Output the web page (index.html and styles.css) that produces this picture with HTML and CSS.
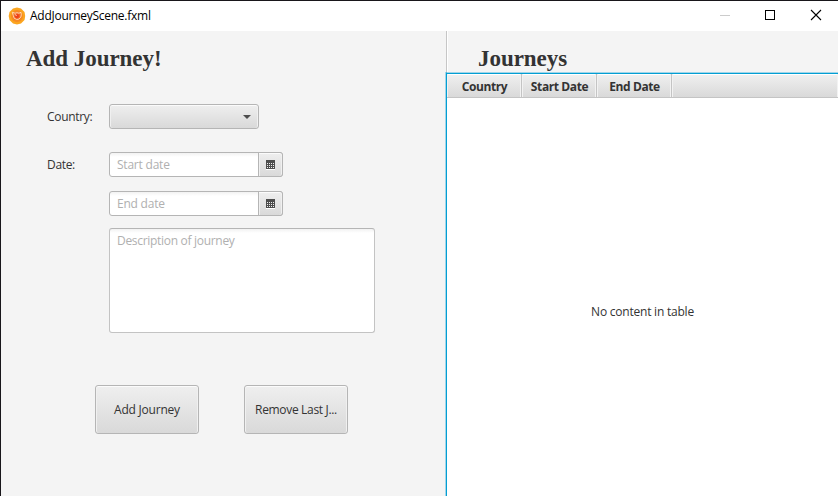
FILE: index.html
```html
<!DOCTYPE html>
<html lang="en">
<head>
<meta charset="utf-8">
<title>AddJourneyScene.fxml</title>
<link rel="stylesheet" href="styles.css">
</head>
<body>
<div class="window">
  <header class="titlebar">
    <svg class="app-icon" width="18" height="18" viewBox="0 0 18 18">
      <path d="M5 1.500 9 .5l4 1 3.500 3.500.7 4-.7 4-3.500 3.500-4 1-4-1L1.500 13 .7 9l.8-4z" fill="#fba51f"/>
      <circle cx="9" cy="9" r="6" fill="#f68a22"/>
      <circle cx="9" cy="9" r="4" fill="#f26522"/>
      <circle cx="9" cy="9" r="2" fill="#ef3e1c"/>
      <path d="M4.300 5.300 7 6.200Q9 5.200 11 6.200l2-.9Q13.600 8 12.800 10 11.500 12.800 8.800 12.500 5.300 12 5.300 8.500zM6.800 7.500l2 1" fill="none" stroke="#ffe3c2" stroke-width=".9"/>
    </svg>
    <span class="title">AddJourneyScene.fxml</span>
    <svg class="controls" width="108" height="30" viewBox="0 0 108 30" shape-rendering="crispEdges">
      <path d="M2 14.500h10" stroke="#ccc"/>
      <rect x="47.500" y="9.500" width="9" height="9" fill="none" stroke="#000"/>
      <path d="M93 9l10 10M103 9l-10 10" stroke="#000" stroke-width="1.100" shape-rendering="auto"/>
    </svg>
  </header>
  <div class="split">
    <main class="form">
      <h1 class="heading">Add Journey!</h1>
      <div class="row country">
        <span class="label w-country">Country:</span>
        <div class="combo"><svg width="8" height="4" viewBox="0 0 8 4"><path d="M0 0h8L4 4z" fill="#4d4d4d"/></svg></div>
      </div>
      <div class="row start">
        <span class="label w-date">Date:</span>
        <div class="date"><span class="prompt w-start">Start date</span><div class="picker"><svg class="cal" width="9" height="10" viewBox="0 0 9 10" shape-rendering="crispEdges"><path d="M0 0h9v9H0z" fill="#4d4d4d"/><path d="M1 3.500h8M1 5.500h8M1 7.500h8" stroke="#eee" stroke-dasharray="1 1"/><path d="M0 9.500h9" stroke="#fff"/></svg></div></div>
      </div>
      <div class="row end">
        <span class="label"></span>
        <div class="date"><span class="prompt w-end">End date</span><div class="picker"><svg class="cal" width="9" height="10" viewBox="0 0 9 10" shape-rendering="crispEdges"><path d="M0 0h9v9H0z" fill="#4d4d4d"/><path d="M1 3.500h8M1 5.500h8M1 7.500h8" stroke="#eee" stroke-dasharray="1 1"/><path d="M0 9.500h9" stroke="#fff"/></svg></div></div>
      </div>
      <div class="area"><span class="prompt w-desc">Description of journey</span></div>
      <div class="buttons">
        <div class="button"><span class="w-add">Add Journey</span></div>
        <div class="button"><span class="w-remove">Remove Last J...</span></div>
      </div>
    </main>
    <section class="journeys">
      <h1 class="heading">Journeys</h1>
      <div class="table">
        <div class="thead">
          <div class="th"><span class="h-country">Country</span></div>
          <div class="th"><span class="h-start">Start Date</span></div>
          <div class="th"><span class="h-end">End Date</span></div>
          <div class="filler"></div>
        </div>
        <div class="empty"><span class="w-empty">No content in table</span></div>
      </div>
    </section>
  </div>
</div>
</body>
</html>
```
FILE: styles.css
```css
* { box-sizing: border-box; }
body {
  margin: 0;
  overflow: hidden;
  font: 12px/16px "Open Sans", "Noto Sans", sans-serif;
  color: #333;
  white-space: nowrap;
}
svg { display: block; flex: none; }
.window {
  width: 838px;
  height: 496px;
  display: flex;
  flex-direction: column;
  border-top: 1px solid #18161a;
  border-left: 1px solid #18161a;
  background: #f4f4f4;
}
.titlebar {
  flex: none;
  display: flex;
  align-items: center;
  height: 30px;
  padding-left: 7px;
  background: #fff;
  color: #000;
}
.title { margin-left: 4px; letter-spacing: -.26px; }
.controls { margin-left: auto; margin-right: 12px; }
.split { flex: 1; display: flex; min-height: 0; }
.form { width: 445px; flex: none; }
.heading {
  margin: 0;
  font: bold 23px/28px "Liberation Serif", serif;
  letter-spacing: -.05px;
}
.form .heading { padding: 14px 0 0 25px; }
.row { display: flex; align-items: center; height: 25px; padding-left: 46px; }
.label { width: 62px; }
.country { margin-top: 31px; }
.start { margin-top: 23px; }
.end { margin-top: 14px; }
.combo, .button, .picker {
  background: linear-gradient(#efefef, #d9d9d9);
  border: 1px solid #b5b5b5;
  border-radius: 3px;
  box-shadow: inset 0 1px #fbfbfb, inset 1px 0 #f0f0f0, inset -1px 0 #f0f0f0;
}
.combo {
  width: 150px;
  height: 25px;
  display: flex;
  align-items: center;
  justify-content: flex-end;
  padding-right: 7px;
}
.date {
  width: 174px;
  height: 25px;
  display: flex;
  align-items: center;
  border: 1px solid #b5b5b5;
  border-radius: 3px;
  background: linear-gradient(#f2f2f2, #fff 4px);
}
.prompt { color: #b0b0b0; padding-left: 7px; }
.picker {
  width: 25px;
  height: 25px;
  margin: -1px -1px -1px auto;
  border-radius: 0 3px 3px 0;
  display: flex;
  align-items: center;
  justify-content: center;
}
.area {
  width: 266px;
  height: 105px;
  margin: 12px 0 0 108px;
  padding-top: 4px;
  border: 1px solid #c3c3c3;
  border-top-color: #b5b5b5;
  border-radius: 3px;
  background: linear-gradient(#f2f2f2, #fff 4px);
}
.buttons { display: flex; gap: 45px; margin: 52px 0 0 94px; }
.button {
  width: 104px;
  height: 49px;
  display: flex;
  align-items: center;
  justify-content: center;
}
.journeys {
  flex: 1;
  min-width: 0;
  display: flex;
  flex-direction: column;
}
.journeys .heading {
  height: 41px;
  padding: 14px 0 0 31px;
  border-left: 1px solid #c6c6c6;
  box-shadow: inset 1px 0 #fff;
}
.table {
  flex: 1;
  display: flex;
  flex-direction: column;
  border-left: 1px solid #039ed3;
  border-top: 1px solid #a2d5e8;
  box-shadow: -1px 0 #a2d5e8;
  background: #fff;
}
.thead {
  display: flex;
  flex: none;
  height: 25px;
  border-top: 1px solid #039ed3;
  border-bottom: 1px solid #c4c4c4;
  background: linear-gradient(#fff 1px, #efefef 1px, #d9d9d9);
}
.th {
  width: 75px;
  border-right: 1px solid #c4c4c4;
  box-shadow: inset -1px 0 #f2f2f2, inset 1px 0 #f2f2f2;
  display: flex;
  align-items: center;
  justify-content: center;
  font-weight: bold;
  padding-top: 2px;
}
.filler { flex: 1; box-shadow: inset 1px 0 #f2f2f2, inset -1px 0 #f2f2f2; }
.empty {
  flex: 1;
  display: flex;
  justify-content: center;
  padding-top: 206px;
}
.w-country, .w-date { letter-spacing: -.32px; }
.w-start, .w-end, .w-add, .w-empty { letter-spacing: -.22px; }
.w-desc { letter-spacing: -.3px; }
.w-remove { letter-spacing: -.33px; }
.h-country, .h-start, .h-end { letter-spacing: -.4px; padding-left: 1px; }
```
